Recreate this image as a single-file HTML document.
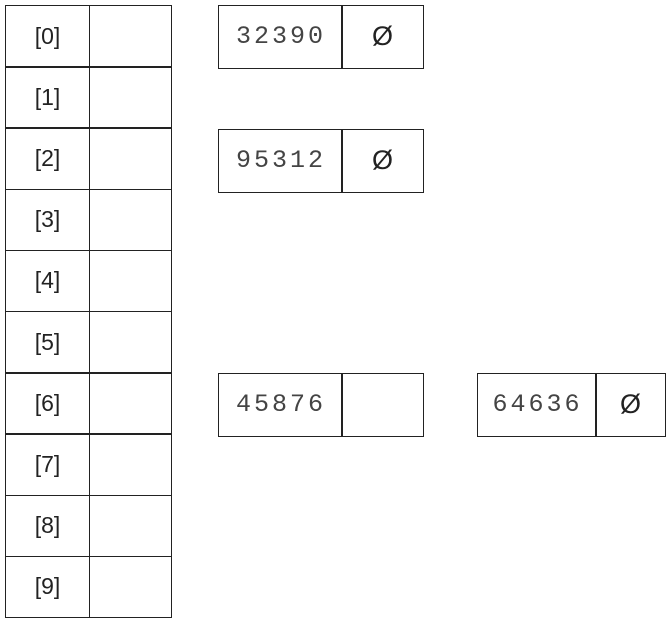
<!DOCTYPE html>
<html><head><style>
body{margin:0;width:670px;height:618px;background:#fff;position:relative;overflow:hidden}
.b{position:absolute;border:1.5px solid #222;box-sizing:border-box}
.t{position:absolute;display:flex;align-items:center;justify-content:center;color:#222}
.idx{font-family:"Liberation Sans",sans-serif;font-size:23px}
.num{font-family:"Liberation Mono",monospace;font-size:25px;color:#444;letter-spacing:3px;padding-left:3px;box-sizing:border-box}
.nul{font-family:"Liberation Sans",sans-serif;font-size:27px}
</style></head><body>
<div id="tbl"></div>
<script>
let h='';
for(let i=0;i<10;i++){
 const y=5+i*61.2;
 h+=`<div class="b" style="left:5px;top:${y}px;width:85px;height:62.7px"></div>`;
 h+=`<div class="b" style="left:88.5px;top:${y}px;width:83px;height:62.7px"></div>`;
 h+=`<div class="t idx" style="left:5px;top:${y}px;width:85px;height:62px">[${i}]</div>`;
}
function box(x,y,w1,w2,n,nul){
 h+=`<div class="b" style="left:${x}px;top:${y}px;width:${w1+1.5}px;height:64px"></div>`;
 h+=`<div class="b" style="left:${x+w1}px;top:${y}px;width:${w2}px;height:64px"></div>`;
 h+=`<div class="t num" style="left:${x}px;top:${y}px;width:${w1}px;height:62px">${n}</div>`;
 if(nul)h+=`<div class="t nul" style="left:${x+w1}px;top:${y}px;width:${w2}px;height:62px">Ø</div>`;
}
box(218,5,123,83,'32390',1);
box(218,129,123,83,'95312',1);
box(218,373,123,83,'45876',0);
box(477,373,118,71,'64636',1);
document.getElementById('tbl').innerHTML=h;
</script>
</body></html>
